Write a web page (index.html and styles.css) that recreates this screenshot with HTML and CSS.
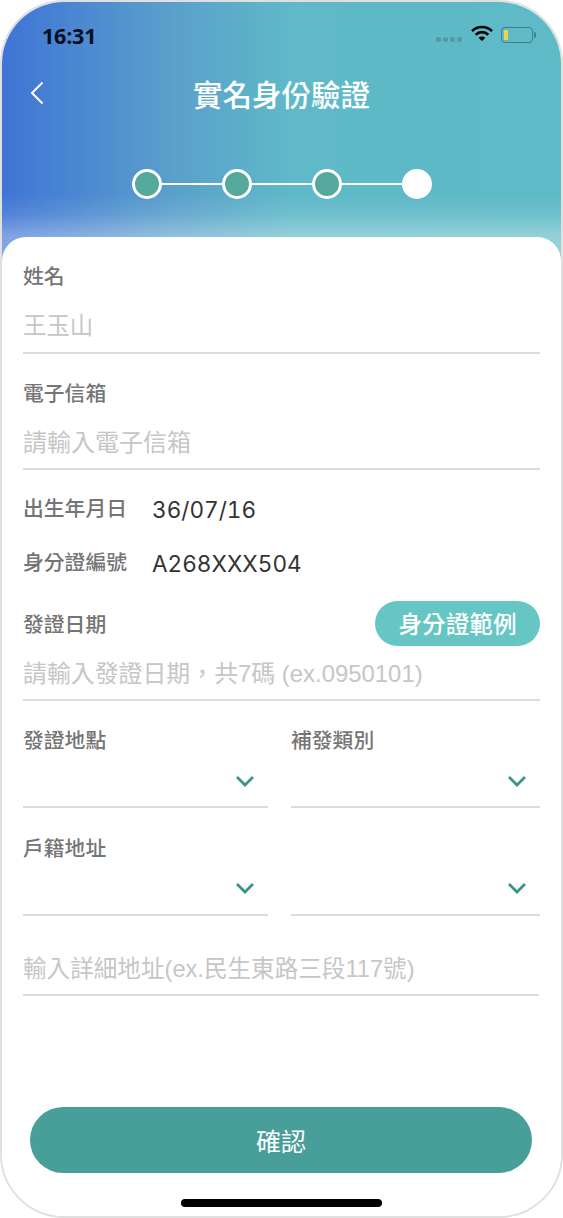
FILE: index.html
```html
<!DOCTYPE html>
<html lang="zh-Hant">
<head>
<meta charset="utf-8">
<title>實名身份驗證</title>
<link rel="stylesheet" href="styles.css">
</head>
<body>
<div class="phone">
  <header class="hero">
    <div class="status">
      <span class="time">16:31</span>
      <div class="status-icons">
        <span class="signal"><i></i><i></i><i></i><i></i></span>
        <svg class="wifi" width="22" height="17" viewBox="0 0 22 16"><path d="M1 5.6a14.2 14.2 0 0 1 20 0" fill="none" stroke="#000" stroke-width="2.6"/><path d="M4.7 9.2a9 9 0 0 1 12.6 0" fill="none" stroke="#000" stroke-width="2.6"/><path d="M11 15.6 7.6 12.3a4.8 4.8 0 0 1 6.8 0z" fill="#000"/></svg>
        <span class="battery"><span class="level"></span></span><span class="nub"></span>
      </div>
    </div>
    <div class="nav">
      <svg class="back" width="14" height="24" viewBox="0 0 14 24"><path d="M12.5 1.5 2 12l10.5 10.5" fill="none" stroke="#fff" stroke-width="2"/></svg>
      <h1>實名身份驗證</h1>
      <span></span>
    </div>
    <div class="steps">
      <span class="dot done"></span><span class="link"></span>
      <span class="dot done"></span><span class="link"></span>
      <span class="dot done"></span><span class="link"></span>
      <span class="dot"></span>
    </div>
  </header>

  <main class="card">
    <section class="field first">
      <div class="label">姓名</div>
      <div class="value ph name">王玉山</div>
    </section>
    <section class="field email">
      <div class="label">電子信箱</div>
      <div class="value ph">請輸入電子信箱</div>
    </section>
    <div class="info birth"><span class="label">出生年月日</span><span class="data">36/07/16</span></div>
    <div class="info idno"><span class="label">身分證編號</span><span class="data">A268XXX504</span></div>
    <section class="field issue">
      <div class="issue-head"><span class="label">發證日期</span><span class="pill">身分證範例</span></div>
      <div class="value ph tight">請輸入發證日期，共7碼 (ex.0950101)</div>
    </section>
    <div class="selects place">
      <div class="select left">
        <div class="label">發證地點</div>
        <div class="box"><svg class="chev" width="20" height="13" viewBox="0 0 20 13"><path d="M2 2l8 8 8-8" fill="none" stroke="#3a938e" stroke-width="2.8"/></svg></div>
      </div>
      <div class="select right">
        <div class="label">補發類別</div>
        <div class="box"><svg class="chev" width="20" height="13" viewBox="0 0 20 13"><path d="M2 2l8 8 8-8" fill="none" stroke="#3a938e" stroke-width="2.8"/></svg></div>
      </div>
    </div>
    <div class="selects addr">
      <div class="select left">
        <div class="label">戶籍地址</div>
        <div class="box"><svg class="chev" width="20" height="13" viewBox="0 0 20 13"><path d="M2 2l8 8 8-8" fill="none" stroke="#3a938e" stroke-width="2.8"/></svg></div>
      </div>
      <div class="select right">
        <div class="label">&nbsp;</div>
        <div class="box"><svg class="chev" width="20" height="13" viewBox="0 0 20 13"><path d="M2 2l8 8 8-8" fill="none" stroke="#3a938e" stroke-width="2.8"/></svg></div>
      </div>
    </div>
    <div class="detail ph">輸入詳細地址(ex.民生東路三段117號)</div>
    <button class="confirm" type="button">確認</button>
    <div class="home"></div>
  </main>
</div>
</body>
</html>
```
FILE: styles.css
```css
* { box-sizing: border-box; }
html, body { margin: 0; padding: 0; background: #fff; }
body {
  width: 563px;
  height: 1218px;
  overflow: hidden;
  font-family: "Noto Sans CJK TC", "Noto Sans", sans-serif;
}
.phone {
  width: 563px;
  height: 1218px;
  border-radius: 64px;
  overflow: hidden;
  border: 2px solid #e0e0e0;
  background: #fff;
  display: flex;
  flex-direction: column;
}
.hero {
  height: 260px;
  flex: none;
  color: #fff;
  background:
    linear-gradient(180deg, rgba(255,255,255,0) 0, rgba(255,255,255,0) 192px, rgba(255,255,255,.1) 212px, rgba(255,255,255,.34) 235px, rgba(255,255,255,.34) 260px),
    linear-gradient(90deg, #3f74d6 0%, #5a9fcb 30%, #5fb9c8 52%, #5dbac6 100%);
}
.status {
  height: 50px;
  padding: 16px 25px 0 40px;
  display: flex;
  justify-content: space-between;
  align-items: center;
}
.time {
  font-family: "Open Sans", "Noto Sans", sans-serif;
  font-weight: 700;
  font-size: 21.5px;
  color: #05101c;
  letter-spacing: -.2px;
}
.status-icons { display: flex; align-items: center; }
.signal { display: flex; gap: 2px; margin-right: 9px; margin-top: 8px; }
.signal i { width: 5px; height: 5px; border-radius: 50%; background: #4d9aa6; }
.wifi { margin-right: 8px; margin-top: -4px; }
.battery {
  width: 32px;
  height: 16px;
  border: 1.5px solid #3d7f88;
  border-radius: 4px;
  padding: 2px;
  display: flex;
}
.level { width: 4px; background: #f0d54a; border-radius: 1px; }
.nub { width: 2px; height: 6px; background: #3d7f88; border-radius: 0 2px 2px 0; margin-left: 1px; }
.nav {
  height: 44px;
  margin-top: 19px;
  display: grid;
  grid-template-columns: 1fr auto 1fr;
  align-items: center;
}
.back { margin-left: 28px; }
.nav h1 { margin: 0; font-size: 29.5px; line-height: 44px; font-weight: 500; }
.steps {
  margin-top: 54px;
  display: flex;
  align-items: center;
  justify-content: center;
}
.dot {
  width: 30px;
  height: 30px;
  border-radius: 50%;
  background: #fff;
  flex: none;
}
.dot.done { background: #54a89c; border: 3px solid #fff; }
.link { width: 60px; height: 2px; background: #fff; flex: none; }

.card {
  flex: 1;
  margin-top: -25px;
  background: #fff;
  border-radius: 24px 24px 0 0;
  padding: 0 21px;
  display: flex;
  flex-direction: column;
}
.label { font-size: 20.8px; line-height: 26px; padding-bottom: 2px; font-weight: 500; color: #757575; }
.ph {
  font-family: "Liberation Sans", "Noto Sans CJK TC", sans-serif;
  color: #c6c6c6;
  font-size: 24px;
}
.name { font-size: 23.4px; }
.field { border-bottom: 2px solid #dcdcdc; }
.field.first { margin-top: 25px; height: 92px; }
.field.email { margin-top: 25px; height: 91px; }
.value { line-height: 32px; margin-top: 20px; }
.value.tight { margin-top: 12px; font-size: 23.9px; }
.info { display: flex; align-items: center; height: 28px; }
.info .data {
  font-family: "Inter", "Liberation Sans", sans-serif;
  font-size: 22.6px;
  font-variant-numeric: tabular-nums;
  color: #333;
  margin: 2px 0 0 25px;
}
.birth { margin-top: 24px; }
.idno { margin-top: 26px; }
.issue { margin-top: 25px; height: 100px; }
.issue-head { display: flex; justify-content: space-between; align-items: center; height: 45px; }
.pill {
  width: 165px;
  height: 45px;
  border-radius: 23px;
  background: #66c6c3;
  color: #fff;
  font-size: 23.6px;
  font-weight: 500;
  text-align: center;
  line-height: 45px;
}
.selects { display: flex; justify-content: space-between; }
.select.left { width: 245px; }
.select.right { width: 249px; }
.place { margin-top: 25px; }
.addr { margin-top: 26px; }
.box { height: 54px; border-bottom: 2px solid #dcdcdc; display: flex; justify-content: flex-end; align-items: flex-start; padding: 21px 13px 0 0; }
.addr .box { padding-top: 20px; }
.detail { margin-top: 37px; height: 43px; line-height: 32px; font-size: 23.6px; border-bottom: 2px solid #dcdcdc; width: 516px; }
.confirm {
  margin-top: auto;
  margin-left: 7px;
  align-self: flex-start;
  width: 502px;
  height: 66px;
  border: 0;
  border-radius: 33px;
  background: #489e99;
  color: #fff;
  font-family: inherit;
  font-size: 25px;
}
.home {
  flex: none;
  align-self: center;
  margin: 26px 0 9px;
  width: 201px;
  height: 8px;
  border-radius: 4px;
  background: #000;
}
```
